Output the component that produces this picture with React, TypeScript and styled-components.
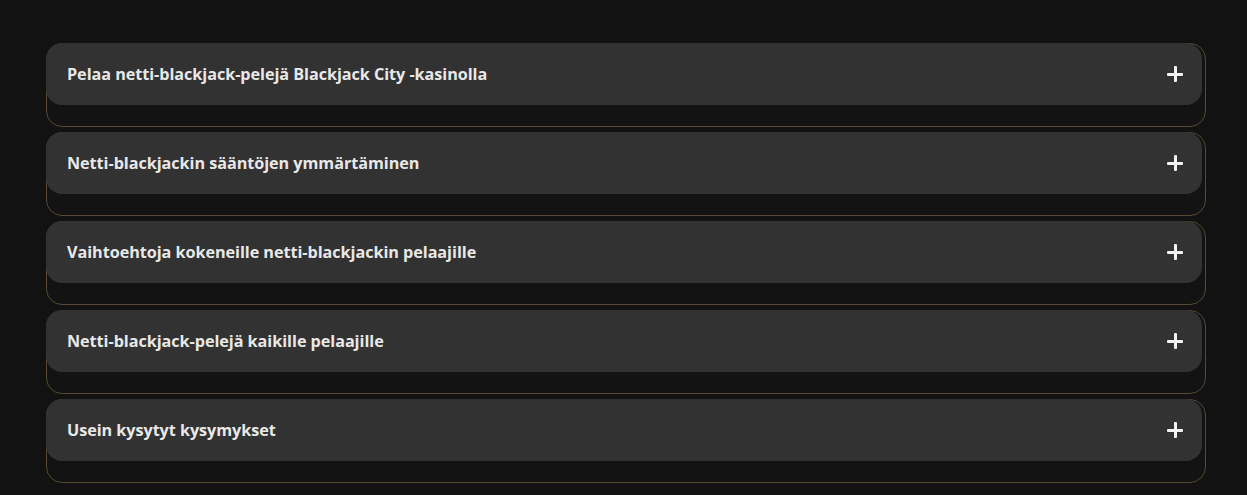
import React, { useState } from "react";
import styled, { createGlobalStyle } from "styled-components";

const GlobalStyle = createGlobalStyle`
	html, body {
		margin: 0;
		padding: 0;
		background: #121212;
	}
	body {
		font-family: "Open Sans", "Liberation Sans", sans-serif;
	}
`;

const Page = styled.div`
	min-height: 495px;
	box-sizing: border-box;
	padding: 43px 41px 0 46px;
	display: flex;
	flex-direction: column;
	gap: 5px;
`;

const Item = styled.div`
	box-sizing: border-box;
	height: 84px;
	border: 1px solid #554a32;
	border-radius: 16px;
	background: #131313;
	padding-right: 2px;
`;

const Header = styled.button`
	all: unset;
	box-sizing: border-box;
	width: 100%;
	height: 62px;
	margin: -1px 0 0 -1px;
	padding: 0 19px 0 21px;
	display: flex;
	align-items: center;
	justify-content: space-between;
	background: #333232;
	border-radius: 16px;
	cursor: pointer;
`;

const Title = styled.span`
	font-family: "Open Sans", "Liberation Sans", sans-serif;
	font-weight: 700;
	font-size: 16.2px;
	letter-spacing: -0.05px;
	color: #e8e8e8;
`;

const Plus = styled.span`
	width: 16px;
	height: 16px;
	position: relative;

	&::before,
	&::after {
		content: "";
		position: absolute;
		background: #f2f2f2;
		border-radius: 1px;
	}
	&::before {
		left: 0;
		right: 0;
		top: 6.5px;
		height: 3px;
	}
	&::after {
		top: 0;
		bottom: 0;
		left: 6.5px;
		width: 3px;
	}
`;

const items = [
	"Pelaa netti-blackjack-pelejä Blackjack City -kasinolla",
	"Netti-blackjackin sääntöjen ymmärtäminen",
	"Vaihtoehtoja kokeneille netti-blackjackin pelaajille",
	"Netti-blackjack-pelejä kaikille pelaajille",
	"Usein kysytyt kysymykset",
];

export default function App() {
	const [open, setOpen] = useState<number | null>(null);
	return (
		<>
			<GlobalStyle />
			<Page>
				{items.map((title, i) => (
					<Item key={title}>
						<Header onClick={() => setOpen(open === i ? null : i)}>
							<Title>{title}</Title>
							<Plus />
						</Header>
					</Item>
				))}
			</Page>
		</>
	);
}
